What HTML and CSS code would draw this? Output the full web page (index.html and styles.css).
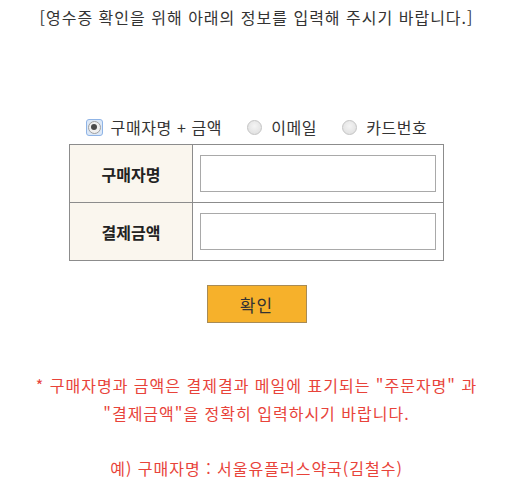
FILE: index.html
```html
<!DOCTYPE html>
<html lang="ko">
<head>
<meta charset="utf-8">
<link rel="stylesheet" href="styles.css">
</head>
<body>
<div class="page">
  <p class="intro">[영수증 확인을 위해 아래의 정보를 입력해 주시기 바랍니다.]</p>
  <div class="options">
    <label class="opt"><span class="radio checked"><span class="circle"><span class="dot"></span></span></span>구매자명 + 금액</label>
    <label class="opt"><span class="radio"><span class="circle"></span></span>이메일</label>
    <label class="opt"><span class="radio"><span class="circle"></span></span>카드번호</label>
  </div>
  <table class="form">
    <tr>
      <th>구매자명</th>
      <td><input type="text" class="field"></td>
    </tr>
    <tr>
      <th>결제금액</th>
      <td><input type="text" class="field"></td>
    </tr>
  </table>
  <div class="actions"><button class="confirm" type="button">확인</button></div>
  <p class="notice">* 구매자명과 금액은 결제결과 메일에 표기되는 "주문자명" 과<br>"결제금액"을 정확히 입력하시기 바랍니다.</p>
  <p class="example">예) 구매자명 : 서울유플러스약국(김철수)</p>
</div>
</body>
</html>
```
FILE: styles.css
```css
* { box-sizing: border-box; }
html, body { margin: 0; padding: 0; background: #fff; }
body {
  font-family: "Noto Sans CJK KR", "Noto Sans", sans-serif;
  color: #333;
}
.page {
  width: 513px;
  display: flex;
  flex-direction: column;
  align-items: center;
}
.intro {
  margin: 7px 0 0;
  font-size: 16px;
  letter-spacing: 1px;
  line-height: 20px;
  color: #333;
}
.options {
  margin-top: 90px;
  display: flex;
  align-items: center;
  gap: 24px;
  height: 20px;
  font-size: 16px;
  letter-spacing: 0.6px;
  line-height: 20px;
  color: #333;
}
.opt {
  display: flex;
  align-items: center;
  gap: 8px;
}
.radio {
  width: 17px;
  height: 17px;
  display: flex;
  align-items: center;
  justify-content: center;
  border-radius: 3px;
}
.radio.checked {
  border: 1px solid #8fb4e6;
  background: #dce8f7;
}
.circle {
  width: 15px;
  height: 15px;
  border-radius: 50%;
  border: 1px solid #c4c4c4;
  background: radial-gradient(circle at 50% 40%, #f4f4f4 0%, #dcdcdc 100%);
  display: flex;
  align-items: center;
  justify-content: center;
}
.radio.checked .circle {
  width: 13px;
  height: 13px;
  border-color: #a0a0a0;
  background: #f0f0f0;
}
.dot {
  width: 6px;
  height: 6px;
  border-radius: 50%;
  background: #4a4a4a;
}
.form {
  margin-top: 7px;
  width: 375px;
  border-collapse: collapse;
  border: 1px solid #8c8c8c;
}
.form th, .form td {
  border: 1px solid #8c8c8c;
  height: 58px;
  padding: 0;
}
.form th {
  width: 124px;
  background: #faf6ee;
  font-size: 16px;
  font-weight: bold;
  color: #222;
}
.form td {
  padding: 0 7px 0 7px;
}
.field {
  display: block;
  width: 236px;
  height: 37px;
  border: 1px solid #a9a9a9;
  background: #fff;
  margin: 0;
}
.actions {
  margin-top: 24px;
}
.confirm {
  width: 100px;
  height: 38px;
  background: #f6b12b;
  border: 1px solid #a88b55;
  font-family: "Noto Sans CJK KR", sans-serif;
  font-size: 17px;
  letter-spacing: 1px;
  color: #333;
  padding: 0;
}
.notice {
  margin: 48px 0 0;
  text-align: center;
  font-size: 16px;
  letter-spacing: 1px;
  line-height: 28px;
  color: #e8433a;
}
.example {
  margin: 27px 0 0;
  font-size: 16px;
  letter-spacing: 1px;
  line-height: 28px;
  color: #e8433a;
}
```
